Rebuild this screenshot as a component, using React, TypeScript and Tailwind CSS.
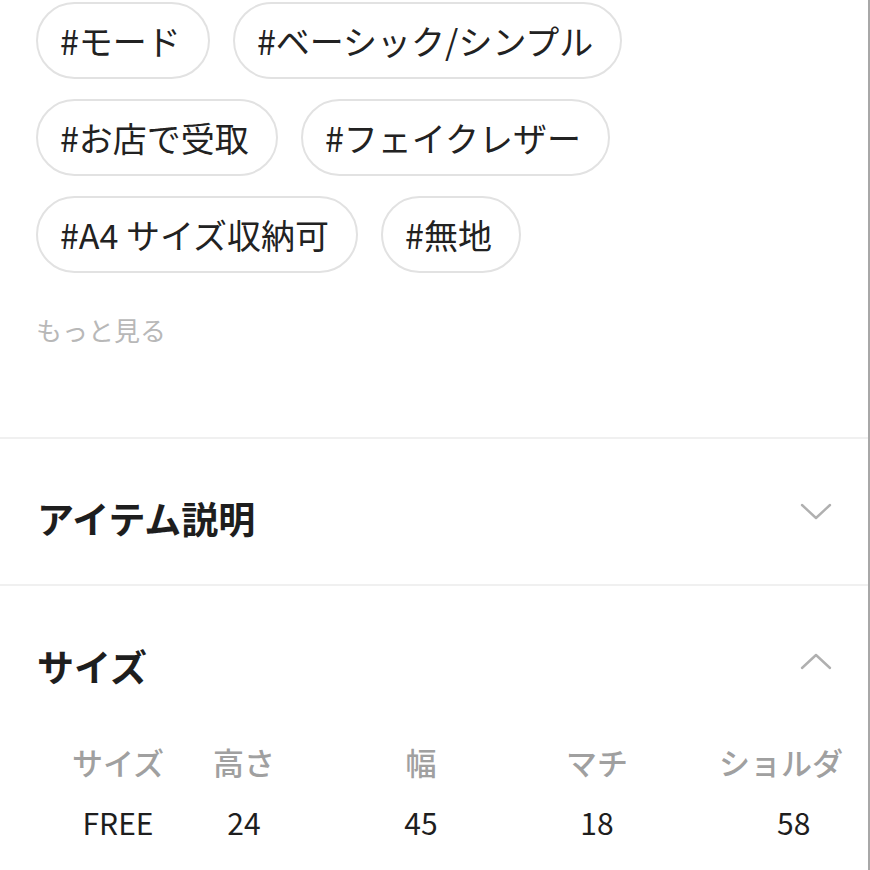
import React from 'react'

const tags = [
  '#モード',
  '#ベーシック/シンプル',
  '#お店で受取',
  '#フェイクレザー',
  '#A4 サイズ収納可',
  '#無地',
]

const sizeHeaders = ['サイズ', '高さ', '幅', 'マチ', 'ショルダ']
const sizeValues = ['FREE', '24', '45', '18', '58']

function Chevron({ up = false }: { up?: boolean }) {
  return (
    <svg width="32" height="18" viewBox="0 0 32 18" fill="none" className="shrink-0">
      <polyline
        points={up ? '2,16 16,3 30,16' : '2,2 16,15 30,2'}
        stroke="#b0b0b0"
        strokeWidth="2.4"
        strokeLinecap="round"
        strokeLinejoin="round"
      />
    </svg>
  )
}

export default function App() {
  return (
    <div
      className="w-full min-h-[870px] bg-white border-r-2 border-[#a8a8a8] overflow-hidden"
      style={{ fontFamily: '"Noto Sans CJK JP", "Noto Sans", sans-serif' }}
    >
      {/* Tags */}
      <div className="px-[36px] pt-[2px]">
        <div className="flex flex-wrap gap-x-[23px] gap-y-[20px]">
          {tags.map((t) => (
            <div
              key={t}
              className="h-[77px] pl-[22px] pr-[27px] flex items-center rounded-full border-2 border-[#e2e2e2] text-[34px] leading-none text-[#222]"
            >
              {t}
            </div>
          ))}
        </div>
        <div className="mt-[38px] h-[36px] flex items-center text-[26px] text-[#b8b8b8]">
          もっと見る
        </div>
      </div>

      <div className="h-[90px]" />

      {/* Item description */}
      <div className="border-t-2 border-[#f0f0f0] h-[147px] pl-[37px] pr-[36px] flex items-center justify-between">
        <div className="text-[37px] font-bold text-[#1e1e1e] leading-none pt-[14px]">アイテム説明</div>
        <Chevron />
      </div>

      {/* Size */}
      <div className="border-t-2 border-[#f0f0f0]">
        <div className="pl-[37px] pr-[36px] pt-[58px] flex items-center justify-between">
          <div className="text-[37px] font-bold text-[#1e1e1e] leading-none pt-[4px]">サイズ</div>
          <div className="-mt-[8px]">
            <Chevron up />
          </div>
        </div>

        <div className="mt-[54px] pl-[58px]">
          <div className="grid grid-cols-[120px_132px_222px_130px_1fr]">
            {sizeHeaders.map((h, i) => (
              <div
                key={h}
                className={
                  i === 4
                    ? 'h-[46px] flex items-center justify-start pl-[57px] text-[31px] font-medium text-[#a0a0a0] whitespace-nowrap'
                    : 'h-[46px] flex items-center justify-center text-[31px] font-medium text-[#a0a0a0] whitespace-nowrap'
                }
              >
                {h}
              </div>
            ))}
            {sizeValues.map((v, i) => (
              <div
                key={v}
                className={
                  i === 4
                    ? 'h-[74px] flex items-center justify-start pl-[115px] text-[30px] text-[#1e1e1e] whitespace-nowrap'
                    : 'h-[74px] flex items-center justify-center text-[30px] text-[#1e1e1e] whitespace-nowrap'
                }
              >
                {v}
              </div>
            ))}
          </div>
        </div>
      </div>
    </div>
  )
}
